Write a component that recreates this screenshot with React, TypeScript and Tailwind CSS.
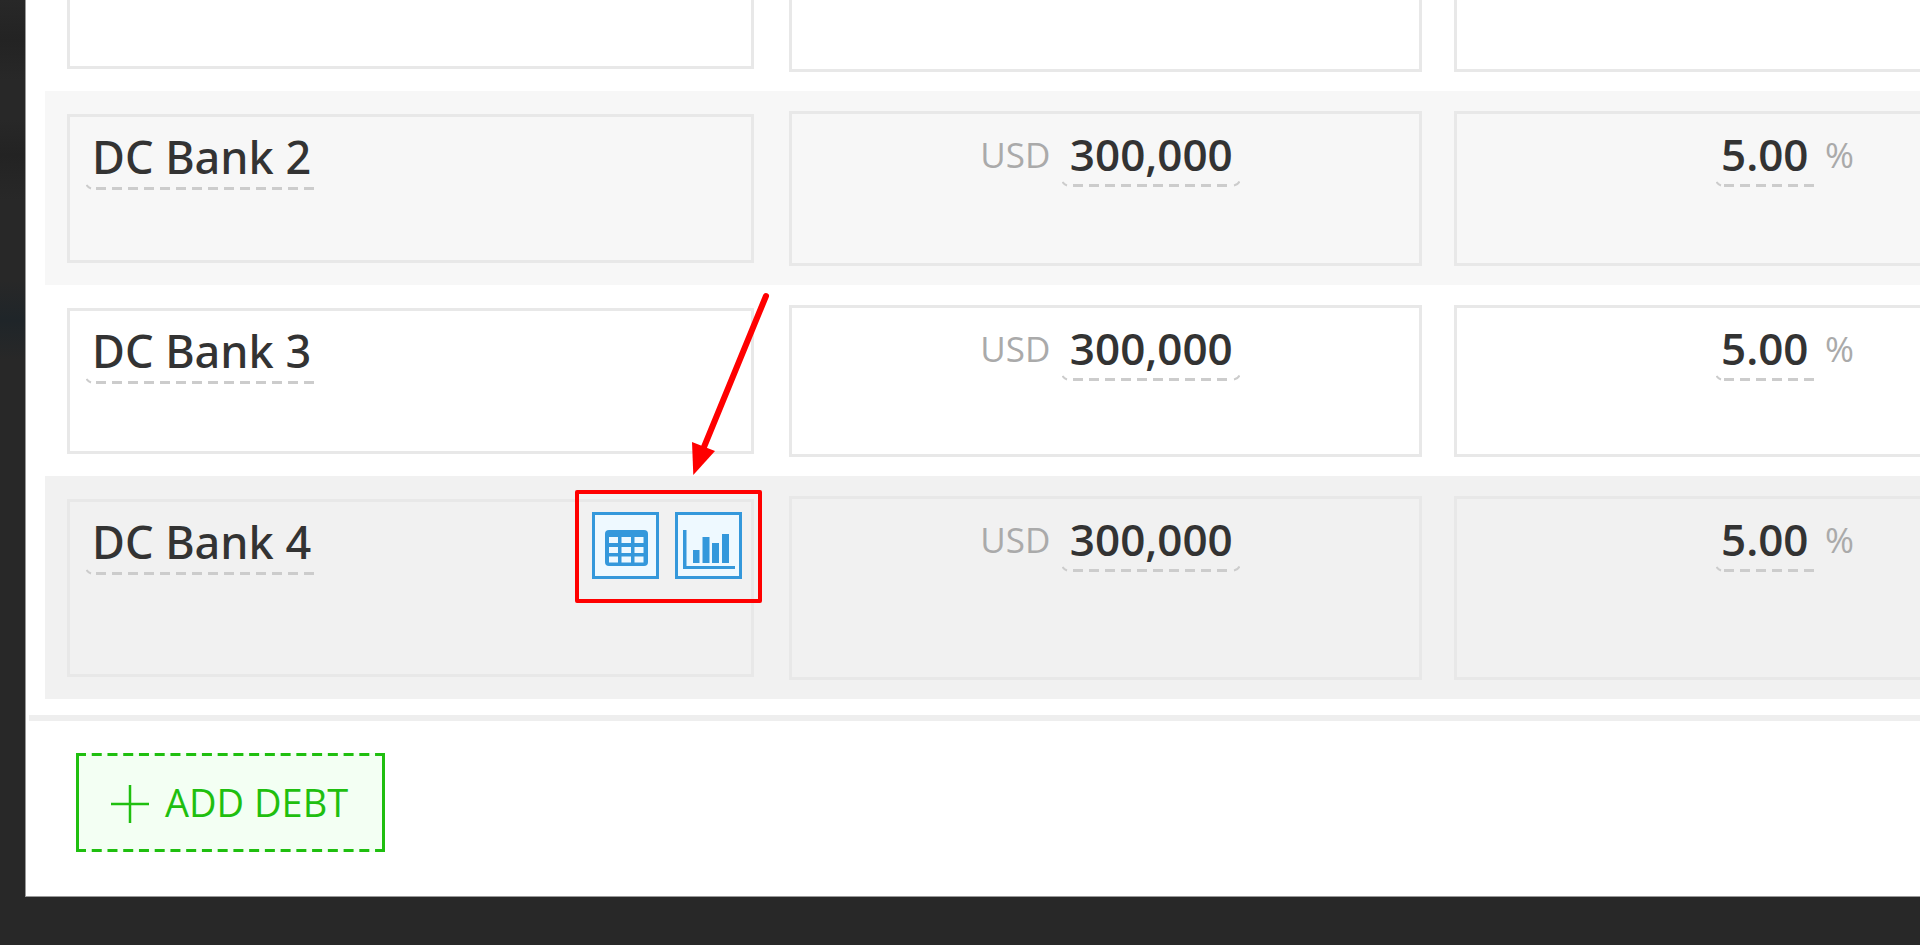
import type React from "react"

type Debt = {
  name: string
  amount: string
  rate: string
  row: string
  nameBox: string
  valueBox: string
  active?: boolean
}

const debts: Debt[] = [
  { name: "DC Bank 2", amount: "300,000", rate: "5.00", row: "bg-[#f7f7f7]", nameBox: "h-[149px]", valueBox: "h-[155px]" },
  { name: "DC Bank 3", amount: "300,000", rate: "5.00", row: "bg-white", nameBox: "h-[146px]", valueBox: "h-[152px]" },
  {
    name: "DC Bank 4",
    amount: "300,000",
    rate: "5.00",
    row: "bg-[#f1f1f1]",
    nameBox: "h-[178px]",
    valueBox: "h-[184px]",
    active: true,
  },
]

const nameText = "pl-[6px] font-['Noto_Sans','Open_Sans',sans-serif] text-[45px] font-medium"
const valueText = "text-[44px] font-semibold"

function Field({
  label,
  value,
  width,
  dashes,
  start,
  closed,
  className,
}: {
  label: string
  value: string
  width: number
  dashes: number
  start: number
  closed?: boolean
  className: string
}) {
  return (
    <div className="flex flex-col" style={{ width }}>
      <input
        aria-label={label}
        defaultValue={value}
        className={`h-[63px] w-full bg-transparent text-[#333] outline-none ${className}`}
      />
      {/* dashed underline with the curled ends of a rounded border */}
      <svg width={width} height="6" className="-mt-1" fill="none" stroke="#ccc" aria-hidden="true">
        <path d="M0.5 1Q2 3.5 5 4.5" strokeWidth="2" />
        <path d={`M${start} 4.5H${start + dashes * 16 - 6}`} strokeWidth="3" strokeDasharray="10 6" />
        {closed && <path d={`M${width - 6} 4.5Q${width - 2} 3.5 ${width - 0.5} 0.5`} strokeWidth="2" />}
      </svg>
    </div>
  )
}

function IconButton({ label, children }: { label: string; children: React.ReactNode }) {
  return (
    <button
      type="button"
      aria-label={label}
      className="flex size-[67px] items-center justify-center border-3 border-[#3498db] bg-[#eef9ff]"
    >
      {children}
    </button>
  )
}

function RowActions() {
  return (
    <div className="relative mt-0.5 flex gap-4">
      <IconButton label="Show payment table">
        <svg width="61" height="61" aria-hidden="true">
          <rect x="10" y="15" width="43" height="36" rx="4" fill="#3498db" />
          <path
            d="M14 22h9v6h-9zM26.500 22h9.500v6h-9.500zM39.500 22h9v6h-9zM14 32h9v6h-9zM26.500 32h9.500v6h-9.500zM39.500 32h9v6h-9zM14 41.500h9v6h-9zM26.500 41.500h9.500v6h-9.500zM39.500 41.500h9v6h-9z"
            fill="#eef9ff"
          />
        </svg>
      </IconButton>
      <IconButton label="Show chart">
        <svg width="61" height="61" fill="#3498db" aria-hidden="true">
          <path d="M5 15h3.500v36h48.500v3h-52z" />
          <path d="M15 35h6.500v13h-6.500zM24.500 22h7v26h-7zM34 28h7v20h-7zM44 19h7v29h-7z" />
        </svg>
      </IconButton>

      {/* highlight frame and pointer */}
      <div className="pointer-events-none absolute -top-[22px] -right-5 -bottom-6 -left-[17px] rounded-xs border-4 border-[#f00]" />
      <svg
        width="90"
        height="190"
        className="pointer-events-none absolute -top-[222px] left-[93px]"
        fill="#f00"
        aria-hidden="true"
      >
        <path d="M81 6L19 157" stroke="#f00" strokeWidth="6" strokeLinecap="round" />
        <path d="M7 152L30 161L8.300 185z" />
      </svg>
    </div>
  )
}

function DebtRow({ debt }: { debt: Debt }) {
  return (
    <tr className={debt.row}>
      <td className="pt-[23px] pr-[17px] pb-[22px] pl-[22px] align-top">
        <div className={`flex items-start justify-between border-3 border-[#e8e8e8] pt-2 pr-[9px] pl-4 ${debt.nameBox}`}>
          <Field label="Debt name" value={debt.name} width={230} dashes={14} start={10} className={nameText} />
          {debt.active && <RowActions />}
        </div>
      </td>
      <td className="pt-5 pr-4 pb-[19px] pl-[18px] align-top">
        <div className={`flex items-start justify-center gap-3 border-3 border-[#e8e8e8] pt-2 pl-2.5 ${debt.valueBox}`}>
          <span className="text-[35px] leading-[66px] text-[#aaa]">USD</span>
          <Field
            label="Amount"
            value={debt.amount}
            width={178}
            dashes={10}
            start={11}
            closed
            className={`text-center ${valueText}`}
          />
        </div>
      </td>
      <td className="pt-5 pr-4 pb-[19px] pl-4 align-top">
        <div className={`flex items-start justify-center gap-2 border-3 border-[#e8e8e8] pt-2 pl-2 ${debt.valueBox}`}>
          <Field
            label="Interest rate"
            value={debt.rate}
            width={101}
            dashes={6}
            start={8}
            className={`pl-[5px] ${valueText}`}
          />
          <span className="text-[35px] leading-[66px] text-[#aaa]">%</span>
        </div>
      </td>
    </tr>
  )
}

export default function App() {
  return (
    <div className="min-h-screen overflow-hidden bg-[#282828] bg-[linear-gradient(#282828_0,#232323_40px,#282828_80px,#282828_120px,#232323_155px,#282828_200px,#282828_280px,#1f2529_320px,#282828_360px)] pl-[25px] font-['Open_Sans','Noto_Sans',sans-serif]">
      <main className="border-b border-l border-[#999] bg-white pb-11">
        <div className="-mr-[204px] pl-[19px]">
          <table className="w-full table-fixed">
            <colgroup>
              <col className="w-[34.9%]" />
              <col className="w-[32.1%]" />
              <col />
            </colgroup>
            <tbody>
              {/* tail of the row scrolled out of view */}
              <tr>
                <td className="pr-[17px] pb-[22px] pl-[22px] align-top">
                  <div className="h-[69px] border-3 border-t-0 border-[#e8e8e8]" />
                </td>
                <td className="pr-4 pb-[19px] pl-[18px] align-top">
                  <div className="h-[72px] border-3 border-t-0 border-[#e8e8e8]" />
                </td>
                <td className="pr-4 pb-[19px] pl-4 align-top">
                  <div className="h-[72px] border-3 border-t-0 border-[#e8e8e8]" />
                </td>
              </tr>
              {debts.map((debt) => (
                <DebtRow key={debt.name} debt={debt} />
              ))}
            </tbody>
          </table>
        </div>

        <div className="mt-4 ml-[3px] h-[6px] bg-[#eee]" />

        <div className="pt-8 pl-[50px]">
          <button
            type="button"
            className="relative flex h-[99px] w-[309px] items-center gap-4 border-x-3 border-[#1fbf0f] bg-[#f3fff3] pl-8 text-[38px] text-[#1fbf0f]"
          >
            <svg
              width="309"
              height="99"
              className="absolute top-0 -left-[3px]"
              fill="none"
              stroke="currentColor"
              strokeWidth="3"
              strokeDasharray="10 5.74"
              aria-hidden="true"
            >
              <path d="M0 1.500H309" />
              <path d="M0 97.500H309" />
            </svg>
            <svg width="38" height="40" stroke="currentColor" strokeWidth="2.500" aria-hidden="true">
              <path d="M19 2V40M0 21H38" />
            </svg>
            ADD DEBT
          </button>
        </div>
      </main>
    </div>
  )
}
